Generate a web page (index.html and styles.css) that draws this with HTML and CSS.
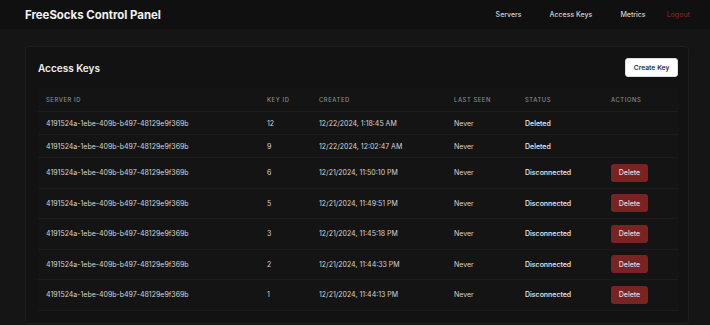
FILE: index.html
```html
<!DOCTYPE html>
<html lang="en">
<head>
    <meta charset="UTF-8">
    <meta name="viewport" content="width=device-width, initial-scale=1.0">
    <title>Access Keys - FreeSocks</title>
    <link rel="stylesheet" href="styles.css">
</head>
<body>
    <nav class="navbar">
        <div class="brand">FreeSocks Control Panel</div>
        <div class="nav-links">
            <a href="#">Servers</a>
            <a href="#">Access Keys</a>
            <a href="#">Metrics</a>
            <a href="#" class="logout">Logout</a>
        </div>
    </nav>

    <main class="page">
        <div class="card">
            <div class="card-header">
                <h2>Access Keys</h2>
                <button class="btn-create">Create Key</button>
            </div>
            <table class="keys-table">
                <thead>
                    <tr>
                        <th class="col-server">Server ID</th>
                        <th class="col-key">Key ID</th>
                        <th class="col-created">Created</th>
                        <th class="col-seen">Last Seen</th>
                        <th class="col-status">Status</th>
                        <th class="col-actions">Actions</th>
                    </tr>
                </thead>
                <tbody>
                    <tr>
                        <td>4191524a-1ebe-409b-b497-48129e9f369b</td>
                        <td>12</td>
                        <td>12/22/2024, 1:18:45 AM</td>
                        <td>Never</td>
                        <td class="status">Deleted</td>
                        <td></td>
                    </tr>
                    <tr>
                        <td>4191524a-1ebe-409b-b497-48129e9f369b</td>
                        <td>9</td>
                        <td>12/22/2024, 12:02:47 AM</td>
                        <td>Never</td>
                        <td class="status">Deleted</td>
                        <td></td>
                    </tr>
                    <tr>
                        <td>4191524a-1ebe-409b-b497-48129e9f369b</td>
                        <td>6</td>
                        <td>12/21/2024, 11:50:10 PM</td>
                        <td>Never</td>
                        <td class="status">Disconnected</td>
                        <td><button class="btn-delete">Delete</button></td>
                    </tr>
                    <tr>
                        <td>4191524a-1ebe-409b-b497-48129e9f369b</td>
                        <td>5</td>
                        <td>12/21/2024, 11:49:51 PM</td>
                        <td>Never</td>
                        <td class="status">Disconnected</td>
                        <td><button class="btn-delete">Delete</button></td>
                    </tr>
                    <tr>
                        <td>4191524a-1ebe-409b-b497-48129e9f369b</td>
                        <td>3</td>
                        <td>12/21/2024, 11:45:18 PM</td>
                        <td>Never</td>
                        <td class="status">Disconnected</td>
                        <td><button class="btn-delete">Delete</button></td>
                    </tr>
                    <tr>
                        <td>4191524a-1ebe-409b-b497-48129e9f369b</td>
                        <td>2</td>
                        <td>12/21/2024, 11:44:33 PM</td>
                        <td>Never</td>
                        <td class="status">Disconnected</td>
                        <td><button class="btn-delete">Delete</button></td>
                    </tr>
                    <tr>
                        <td>4191524a-1ebe-409b-b497-48129e9f369b</td>
                        <td>1</td>
                        <td>12/21/2024, 11:44:13 PM</td>
                        <td>Never</td>
                        <td class="status">Disconnected</td>
                        <td><button class="btn-delete">Delete</button></td>
                    </tr>
                </tbody>
            </table>
        </div>
    </main>
</body>
</html>
```

FILE: styles.css
```css
body {
    font-family: Inter, "Noto Sans", sans-serif;
    background-color: #151515;
    color: #d4d4d4;
    margin: 0;
    padding: 0;
}
.navbar {
    height: 29px;
    background-color: #101010;
    display: flex;
    align-items: center;
    justify-content: space-between;
    padding: 0 20px 0 25px;
}
.brand {
    font-size: 11.4px;
    font-weight: 700;
    color: #f2f2f2;
}
.nav-links {
    display: flex;
}
.nav-links a {
    color: #d2d2d2;
    text-decoration: none;
    font-size: 7px;
    font-weight: 500;
    margin-left: 28px;
}
.nav-links a.logout {
    color: #7f2222;
    margin-left: 21px;
}
.page {
    padding: 17px 21px 0 25px;
}
.card {
    background-color: #121212;
    border: 1px solid #1e1e1e;
    border-radius: 4px;
    padding: 11px 10px 12px 12px;
}
.card-header {
    display: flex;
    justify-content: space-between;
    align-items: center;
    margin-bottom: 11px;
}
.card-header h2 {
    margin: 0;
    font-size: 10px;
    font-weight: 600;
    color: #f0f0f0;
}
.btn-create {
    background-color: #fff;
    color: #111;
    border: 1px solid #ddd;
    border-radius: 3px;
    font-family: inherit;
    font-size: 6.8px;
    font-weight: 500;
    padding: 0 7px;
    width: 53px;
    height: 19px;
    cursor: pointer;
}
.keys-table {
    width: 100%;
    border-collapse: collapse;
    background-color: #141414;
    font-size: 7px;
}
.keys-table th {
    text-align: left;
    font-size: 5.8px;
    font-weight: 500;
    letter-spacing: 0.6px;
    text-transform: uppercase;
    color: #8a8a8a;
    height: 23px;
    padding: 0 8px;
}
.keys-table td {
    padding: 0 8px;
    height: 22px;
    border-top: 1px solid #1c1c1c;
    color: #d4d4d4;
}
.keys-table tbody tr:last-child td {
    border-bottom: 1px solid #1c1c1c;
}
.keys-table td.status {
    color: #ececec;
    font-weight: 500;
}
.keys-table td:has(.btn-delete) {
    height: 29.5px;
}
.col-server { width: 205px; }
.col-key { width: 36px; }
.col-created { width: 119px; }
.col-seen { width: 55px; }
.col-status { width: 70px; }
.btn-delete {
    background-color: #7a2323;
    color: #e4dede;
    border: none;
    border-radius: 3px;
    font-family: inherit;
    font-size: 7px;
    font-weight: 500;
    width: 37px;
    height: 18px;
    cursor: pointer;
}
```
